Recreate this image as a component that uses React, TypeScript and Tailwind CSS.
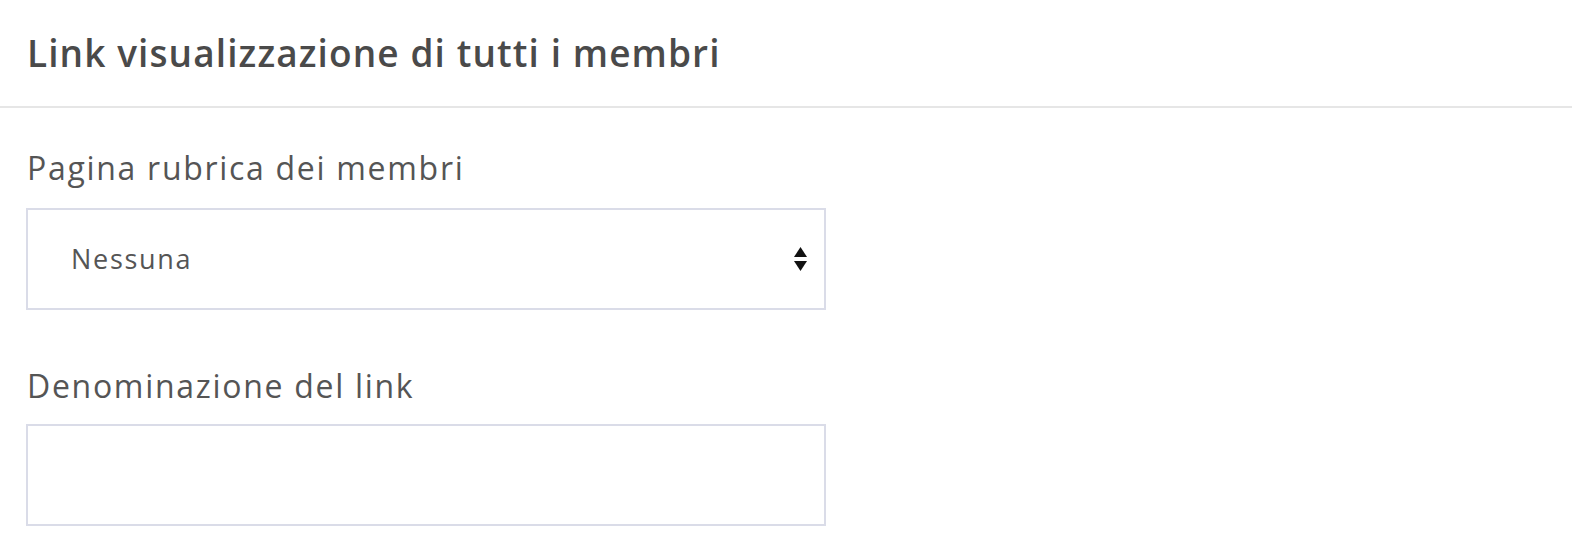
export default function App() {
  return (
    <div className="w-[1572px] h-[552px] bg-white overflow-hidden text-[#4f4f4f]" style={{ fontFamily: '"Open Sans", Lato, sans-serif' }}>
      <div className="h-[108px] flex items-center px-[27px] border-b-2 border-[#e6e6e6]">
        <h2 className="text-[37px] font-semibold tracking-[1.1px] text-[#4a4a4a]">Link visualizzazione di tutti i membri</h2>
      </div>
      <div className="px-[26px] pt-[40px]">
        <label className="block text-[32px] leading-[40px] tracking-[1.7px] text-[#555] mb-[20px] pl-[1px]">Pagina rubrica dei membri</label>
        <div className="relative w-[800px] h-[102px] border-2 border-[#dadce8] flex items-center pl-[43px]">
          <span className="text-[27px] tracking-[1.7px] text-[#555]">Nessuna</span>
          <div className="absolute right-[17px] top-1/2 -translate-y-1/2 flex flex-col items-center gap-[4px]">
            <svg width="13" height="10" viewBox="0 0 13 10"><path d="M6.5 0L13 10H0Z" fill="#111" /></svg>
            <svg width="13" height="10" viewBox="0 0 13 10"><path d="M0 0H13L6.5 10Z" fill="#111" /></svg>
          </div>
        </div>
        <label className="block text-[32px] leading-[40px] tracking-[1.7px] text-[#555] mt-[56px] mb-[18px] pl-[1px]">Denominazione del link</label>
        <div className="w-[800px] h-[102px] border-2 border-[#dadce8]" />
      </div>
    </div>
  );
}
